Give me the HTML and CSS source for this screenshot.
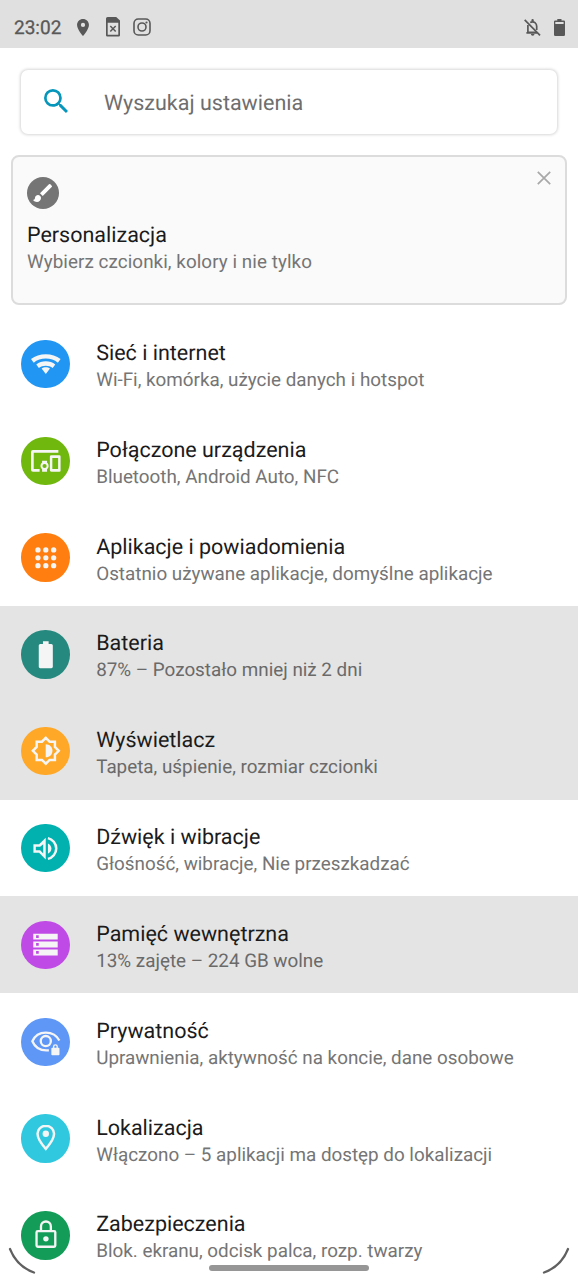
FILE: index.html
```
<!DOCTYPE html>
<html lang="pl">
<head>
<meta charset="utf-8">
<title>Ustawienia</title>
<link rel="stylesheet" href="styles.css">
</head>
<body>
<div class="screen">
  <header class="status">
    <span class="clock">23:02</span>
    <svg class="st-pin" viewBox="5 2 14 20"><path d="M12 2C8.13 2 5 5.13 5 9c0 5.25 7 13 7 13s7-7.75 7-13c0-3.87-3.13-7-7-7zm0 9.5a2.5 2.5 0 0 1 0-5 2.5 2.5 0 0 1 0 5z"/></svg>
    <svg class="st-sim" viewBox="0 0 14 20"><path fill-rule="evenodd" d="M1.600 0H10.200L14 3.600V18.2A1.4 1.4 0 0 1 12.6 19.6H1.4A1.4 1.4 0 0 1 0 18.2V1.600A1.600 1.600 0 0 1 1.600 0ZM1.7 5.8V17.8H12.3V5.8Z"/><path class="line" d="M4.3 9l5.400 5.600M9.700 9l-5.400 5.600" stroke-width="1.5"/></svg>
    <svg class="st-insta" viewBox="0 0 18 18"><rect class="line" x="1" y="1" width="16" height="16" rx="4.300" stroke-width="1.600"/><circle class="line" cx="9" cy="9" r="4" stroke-width="1.600"/><circle cx="13.500" cy="4.500" r="1.100"/></svg>
    <svg class="st-bell" viewBox="0 0 17 17"><path class="line" d="M.7.9l15.300 15.400" stroke-width="1.700"/><path class="line" d="M3.900 5.900V13.400H12.300M2.400 13.900H13M6.200 3.500C10.200 1.500 12.700 4.600 12.700 7.300V11" stroke-width="1.700"/><path d="M7.400 2.600V1.300a1.200 1.200 0 0 1 2.400 0v1.300zM6.900 15h3.600a1.800 1.800 0 0 1-3.600 0z"/></svg>
    <svg class="st-batt" viewBox="0 0 11 17"><path fill-rule="evenodd" d="M3.300 0h4.200v1.400h2.200A1.200 1.200 0 0 1 11 2.600v13.100a1.200 1.200 0 0 1-1.200 1.200H1.200A1.200 1.200 0 0 1 0 15.700V2.600a1.200 1.200 0 0 1 1.200-1.200h2.100zM1.300 3v2h8.300V3z"/></svg>
  </header>

  <div class="search">
    <svg class="search-icon" viewBox="3 3 17.500 17.500"><path d="M15.500 14h-.79l-.28-.27A6.471 6.471 0 0 0 16 9.500 6.500 6.500 0 1 0 9.500 16c1.610 0 3.090-.59 4.230-1.570l.27.28v.79l5 4.990L20.490 19l-4.990-5zm-6 0C7.010 14 5 11.990 5 9.500S7.010 5 9.500 5 14 7.010 14 9.500 11.990 14 9.500 14z"/></svg>
    <span class="search-text">Wyszukaj ustawienia</span>
  </div>

  <section class="card">
    <div class="card-top">
      <span class="brush"><svg viewBox="0 0 24 24"><path d="M7 14c-1.660 0-3 1.340-3 3 0 1.310-1.160 2-2 2 .92 1.220 2.490 2 4 2 2.210 0 4-1.790 4-4 0-1.660-1.340-3-3-3zm13.710-9.370l-1.340-1.340a.996.996 0 0 0-1.410 0L9 12.250 11.750 15l8.960-8.960a.996.996 0 0 0 0-1.410z"/></svg></span>
      <svg class="close" viewBox="0 0 14 14"><path d="M.8.8l12.400 12.400M13.200.8L.8 13.200"/></svg>
    </div>
    <div class="title card-title">Personalizacja</div>
    <div class="summary card-sum">Wybierz czcionki, kolory i nie tylko</div>
  </section>

  <main class="list">
    <div class="row"><span class="icon blue"><svg viewBox="0 0 24 24"><path d="M12 20.200l3.400-4.300C14.500 15.200 13.300 14.800 12 14.800s-2.500.4-3.400 1.100L12 20.200zM12 4.200C7.500 4.200 3.300 5.700 0 8.200L2.200 11.100C4.900 9 8.300 7.800 12 7.800s7.100 1.200 9.800 3.300L24 8.200C20.700 5.700 16.500 4.200 12 4.200zM12 10C9.100 10 6.400 10.900 4.300 12.600l2.100 2.800C8 14.200 9.900 13.500 12 13.500s4 .7 5.600 1.900l2.100-2.800C17.600 10.900 14.900 10 12 10z"/></svg></span><div class="text"><div class="title">Sieć i internet</div><div class="summary">Wi-Fi, komórka, użycie danych i hotspot</div></div></div>
    <div class="row"><span class="icon lime"><svg viewBox="0 0 24 24"><path d="M2.200 5.500h20V3.300H1.600A1.600 1.600 0 0 0 0 4.900V19.200A1.600 1.600 0 0 0 1.600 20.800H7v-2.200H2.200zM13 12H9v1.600c-.8.600-1.300 1.500-1.300 2.600s.5 2 1.300 2.600v2h4v-2c.8-.6 1.300-1.500 1.300-2.600s-.5-2-1.300-2.600zm-2 5.900a1.700 1.700 0 0 1 0-3.400 1.700 1.700 0 0 1 0 3.400zM23 7.500h-6.500A1.200 1.200 0 0 0 15.300 8.700v10.900a1.200 1.200 0 0 0 1.200 1.200H23a1 1 0 0 0 1-1V8.500a1 1 0 0 0-1-1zm-1 11.100h-4.700V9.700H22z"/></svg></span><div class="text"><div class="title">Połączone urządzenia</div><div class="summary">Bluetooth, Android Auto, NFC</div></div></div>
    <div class="row"><span class="icon orange"><svg viewBox="0 0 24 24"><g><circle cx="5.500" cy="5.500" r="2.200"/><circle cx="12" cy="5.500" r="2.200"/><circle cx="18.500" cy="5.500" r="2.200"/><circle cx="5.500" cy="12" r="2.200"/><circle cx="12" cy="12" r="2.200"/><circle cx="18.500" cy="12" r="2.200"/><circle cx="5.500" cy="18.500" r="2.200"/><circle cx="12" cy="18.500" r="2.200"/><circle cx="18.500" cy="18.500" r="2.200"/></g></svg></span><div class="text"><div class="title">Aplikacje i powiadomienia</div><div class="summary">Ostatnio używane aplikacje, domyślne aplikacje</div></div></div>
    <div class="row on"><span class="icon teal"><svg viewBox="0 0 24 24"><path d="M16.500 3.300h-2.200V1.100H9.700v2.200H7.500C6.900 3.300 6.300 3.900 6.300 4.500v17.200c0 .7.600 1.200 1.200 1.200h9c.7 0 1.200-.5 1.200-1.200V4.500c0-.6-.5-1.200-1.200-1.200z"/></svg></span><div class="text"><div class="title">Bateria</div><div class="summary">87% – Pozostało mniej niż 2 dni</div></div></div>
    <div class="row on"><span class="icon amber"><svg viewBox="0 0 24 24"><path class="stroke" stroke-width="2" d="M12 1.500l3.100 3.100h4.300v4.300L22.500 12l-3.100 3.100v4.300h-4.300L12 22.500l-3.100-3.100H4.600v-4.300L1.500 12l3.100-3.100V4.600h4.300z"/><path d="M11.900 6.700c3.300 0 5.500 2.300 5.500 5.300s-2.200 5.300-5.500 5.300z"/></svg></span><div class="text"><div class="title">Wyświetlacz</div><div class="summary">Tapeta, uśpienie, rozmiar czcionki</div></div></div>
    <div class="row"><span class="icon cyan"><svg viewBox="0 0 24 24"><path fill-rule="evenodd" d="M2 8.500v7h4.700L12.200 21V3.200L6.700 8.500zM10.100 8.400v7.700L7.600 13.500H4v-3h3.600z"/><path d="M14 7.800v8.500c1.600-.7 2.900-2.300 2.900-4.250S15.600 8.500 14 7.800z"/><path class="stroke" stroke-width="2.100" d="M14 3.400c3.700.9 6.900 4.400 6.900 8.600s-3.200 7.700-6.900 8.600"/></svg></span><div class="text"><div class="title">Dźwięk i wibracje</div><div class="summary">Głośność, wibracje, Nie przeszkadzać</div></div></div>
    <div class="row on"><span class="icon purple"><svg viewBox="0 0 24 24"><path fill-rule="evenodd" d="M1.900 21h20.200v-4.800H1.900zm2.300-3.600h2.200v2.200H4.200zM1.900 3v4.800h20.200V3zm4.500 3.600H4.200V4.400h2.200zM1.900 14.400h20.200V9.600H1.900zm2.300-3.600h2.200V13H4.200z"/></svg></span><div class="text"><div class="title">Pamięć wewnętrzna</div><div class="summary">13% zajęte – 224 GB wolne</div></div></div>
    <div class="row"><span class="icon indigo"><svg viewBox="0 0 24 24"><path class="stroke" stroke-width="1.900" d="M23 11C21.100 7.200 16.900 4.500 12 4.500S3 7.200 1.100 11.500C3 16 7.200 18.900 12.500 18.900H14.500"/><circle class="stroke" cx="12" cy="11.400" r="4.100" stroke-width="1.900"/><path fill-rule="evenodd" d="M17.800 16.800v-.9a2 2 0 0 1 4 0v.9h.6c.4 0 .7.3.7.7v4.800c0 .4-.3.7-.7.7h-5.200c-.4 0-.7-.3-.7-.7v-4.800c0-.4.3-.7.700-.7zm1.100 0h1.800v-.9a.9.900 0 0 0-1.800 0z"/></svg></span><div class="text"><div class="title">Prywatność</div><div class="summary">Uprawnienia, aktywność na koncie, dane osobowe</div></div></div>
    <div class="row"><span class="icon sky"><svg viewBox="0 0 24 24"><path class="stroke" stroke-width="2" d="M12 2.200c-3.800 0-6.700 3-6.700 6.600C5.300 12.700 8.600 17.200 12 21c3.400-3.800 6.700-8.300 6.700-12.200C18.700 5.200 15.800 2.200 12 2.200z"/><circle cx="12" cy="8.700" r="2.600"/></svg></span><div class="text"><div class="title">Lokalizacja</div><div class="summary">Włączono – 5 aplikacji ma dostęp do lokalizacji</div></div></div>
    <div class="row"><span class="icon green"><svg viewBox="0 0 24 24"><rect class="stroke" x="4.500" y="9" width="15.200" height="12.700" rx="1" stroke-width="1.900"/><path class="stroke" stroke-width="1.900" d="M8.100 9V5.200a4 4 0 0 1 8 0V9"/><circle cx="12.100" cy="15.300" r="2.200"/></svg></span><div class="text"><div class="title">Zabezpieczenia</div><div class="summary">Blok. ekranu, odcisk palca, rozp. twarzy</div></div></div>
  </main>

  <svg class="corner left" viewBox="0 0 28 28"><path d="M2 2Q9 19.500 26 25.500"/></svg>
  <svg class="corner right" viewBox="0 0 28 28"><path d="M26 2Q19 19.500 2 25.500"/></svg>
  <div class="home"></div>
</div>
</body>
</html>
```
FILE: styles.css
```
body { margin: 0; background: #fff; font-family: Roboto, "Noto Sans", sans-serif; text-rendering: geometricPrecision; }
svg { display: block; flex: none; }
.screen { position: relative; width: 578px; height: 1284px; overflow: hidden; background: #fff; }

.status { display: flex; align-items: center; height: 48px; padding: 6px 13.500px 0 14px; box-sizing: border-box; background: #e0e0e0; color: #585858; fill: #585858; }
.clock { width: 63px; margin-top: 1px; font-size: 19px; line-height: 22px; -webkit-text-stroke: .3px #585858; white-space: nowrap; }
.line { fill: none; stroke: #585858; }
.st-pin { width: 12px; height: 17px; }
.st-sim { width: 14px; height: 20px; margin-left: 16.500px; }
.st-insta { width: 18px; height: 18px; margin-left: 13px; }
.st-bell { width: 17px; height: 17px; margin-left: auto; }
.st-batt { width: 11px; height: 17px; margin-left: 13px; }

.search { display: flex; align-items: center; height: 64.500px; margin: 21.500px 21px 0; padding-left: 22.500px; box-sizing: border-box; width: 536px; border-radius: 7px; background: #fff; box-shadow: 0 0 3px 1px rgba(0, 0, 0, .16); }
.search-icon { width: 24px; height: 24px; margin-top: -1px; fill: #0696bb; }
.search-text { margin: 4px 0 0 36.500px; font-size: 21.500px; line-height: 26px; color: #6e6e6e; }

.card { margin: 21px 11px 0; height: 150px; box-sizing: border-box; padding: 13px 14px 0 14px; border: 2px solid #dcdcdc; border-radius: 8px; background: #fafafa; }
.card-top { display: flex; justify-content: space-between; height: 44px; }
.brush { display: flex; width: 32px; height: 32px; margin-top: 6.500px; border-radius: 50%; background: #757575; align-items: center; justify-content: center; }
.brush svg { width: 24px; height: 24px; fill: #fff; }
.close { width: 14px; height: 14px; margin-top: 1px; stroke: #a8a8a8; stroke-width: 1.700; }
.card-title { margin-top: 8px; }
.card-sum { letter-spacing: .06px; }

.title { font-size: 21.500px; line-height: 27px; color: #1b1b1b; white-space: nowrap; }
.summary { font-size: 18.830px; line-height: 26px; color: #757575; white-space: nowrap; }
.list { margin-top: 10.500px; }
.row { display: flex; align-items: center; gap: 26.500px; height: 96.830px; padding-left: 21.300px; }
.text { padding-top: 5px; }
.on { background: #e4e4e4; }
.on .summary { color: #6a6a6a; }
.icon { display: flex; align-items: center; justify-content: center; width: 48.400px; height: 48.400px; border-radius: 50%; flex: none; fill: #f5f5f5; }
.icon svg { width: 29.600px; height: 29.600px; overflow: visible; }
.orange g { transform: scale(.98); transform-origin: 12px 12px; }
.stroke { fill: none; stroke: #f5f5f5; }
.sky svg, .green svg { margin-top: -1px; }
.blue { background: #2196f3; }
.lime { background: #70b80e; }
.orange { background: #ff7e0f; }
.teal { background: #26897f; }
.amber { background: #ffa726; }
.cyan { background: #00b1b0; }
.purple { background: #c04ae6; }
.purple svg, .cyan svg { width: 29px; height: 29px; }
.indigo { background: #5e97f6; }
.sky { background: #30c8de; }
.green { background: #129c58; }

.corner { position: absolute; top: 1247px; width: 28px; height: 28px; fill: none; stroke: #606060; stroke-width: 2.300; stroke-linecap: round; }
.left { left: 8px; }
.right { left: 542px; }
.home { position: absolute; left: 209px; top: 1265px; width: 160px; height: 6px; border-radius: 3px; background: #969696; }
```
